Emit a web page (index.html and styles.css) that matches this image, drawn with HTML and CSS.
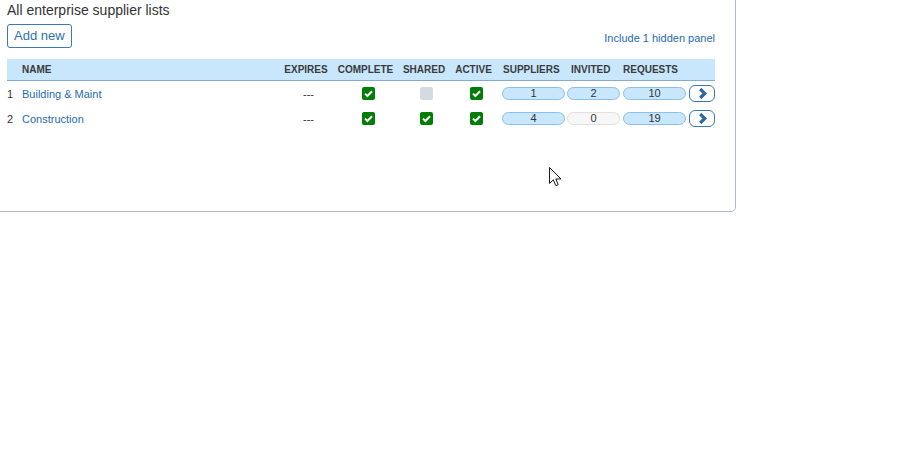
FILE: index.html
```html
<!DOCTYPE html>
<html lang="en">
<head>
<meta charset="utf-8">
<title>Enterprise supplier lists</title>
<link rel="stylesheet" href="styles.css">
</head>
<body>
<section class="panel">
  <h2 class="panel-title">All enterprise supplier lists</h2>
  <div class="toolbar">
    <button class="btn-add" type="button">Add new</button>
    <a class="link-hidden" href="#">Include 1 hidden panel</a>
  </div>

  <div class="grid">
    <div class="row head">
      <div class="c num"></div>
      <div class="c name">Name</div>
      <div class="c mid">Expires</div>
      <div class="c mid">Complete</div>
      <div class="c mid">Shared</div>
      <div class="c mid">Active</div>
      <div class="c h-sup">Suppliers</div>
      <div class="c h-inv">Invited</div>
      <div class="c h-req">Requests</div>
      <div class="c"></div>
    </div>

    <div class="row">
      <div class="c num">1</div>
      <div class="c name"><a href="#">Building &amp; Maint</a></div>
      <div class="c mid data">---</div>
      <div class="c mid data"><span class="chk on"></span></div>
      <div class="c mid data"><span class="chk"></span></div>
      <div class="c mid data"><span class="chk on"></span></div>
      <div class="c"><span class="pill p-sup">1</span></div>
      <div class="c"><span class="pill p-inv">2</span></div>
      <div class="c"><span class="pill p-req">10</span></div>
      <div class="c"><button class="go" type="button"><svg viewBox="0 0 11 11" width="11" height="11"><path d="M3.2 1 L7.8 5.5 L3.2 10" fill="none" stroke="#2f66a3" stroke-width="3.2" stroke-linejoin="miter"/></svg></button></div>
    </div>

    <div class="row">
      <div class="c num">2</div>
      <div class="c name"><a href="#">Construction</a></div>
      <div class="c mid data">---</div>
      <div class="c mid data"><span class="chk on"></span></div>
      <div class="c mid data"><span class="chk on"></span></div>
      <div class="c mid data"><span class="chk on"></span></div>
      <div class="c"><span class="pill p-sup">4</span></div>
      <div class="c"><span class="pill p-inv empty">0</span></div>
      <div class="c"><span class="pill p-req">19</span></div>
      <div class="c"><button class="go" type="button"><svg viewBox="0 0 11 11" width="11" height="11"><path d="M3.2 1 L7.8 5.5 L3.2 10" fill="none" stroke="#2f66a3" stroke-width="3.2" stroke-linejoin="miter"/></svg></button></div>
    </div>
  </div>
</section>

<svg class="cursor" width="13" height="21" viewBox="0 0 13 21">
  <path d="M0.5 0.5 L0.5 16.5 L4.3 12.8 L6.8 18.7 L9.2 17.7 L6.8 12 L12 12 Z" fill="#fff" stroke="#1b1b1b" stroke-width="1" stroke-linejoin="miter"/>
</svg>
</body>
</html>
```

FILE: styles.css
```css
html, body {
  margin: 0;
  padding: 0;
  background: #fff;
}

body {
  font-family: "Liberation Sans", Arial, sans-serif;
  color: #333;
  position: relative;
  height: 469px;
  overflow: hidden;
}

a {
  color: #1f6cb0;
  text-decoration: none;
}

.panel {
  margin: -1px 0 0 -1px;
  width: 708px;
  padding: 2px 20px 80px 7px;
  border: 1px solid #aebcc9;
  border-radius: 0 0 5px 0;
}

.panel-title {
  margin: 0;
  font-size: 14px;
  line-height: 17px;
  font-weight: normal;
  color: #333;
}

.toolbar {
  display: flex;
  justify-content: space-between;
  align-items: center;
  margin-top: 5px;
}

.btn-add {
  font-family: inherit;
  font-size: 13px;
  line-height: 16px;
  height: 24px;
  padding: 3px 6px;
  color: #2d70b1;
  background: #fff;
  border: 1px solid #3a79b6;
  border-radius: 3px;
}

.link-hidden {
  font-size: 11px;
  margin-top: 4px;
}

.grid {
  margin-top: 11px;
}

.row {
  display: grid;
  grid-template-columns: 15px 257px 54px 65px 52px 47px 69px 55px 66px 28px;
  height: 25px;
  align-items: center;
  font-size: 11px;
}

.row.head {
  height: 21px;
  background: #c8e6fc;
  border-bottom: 1px solid #86aacb;
  font-size: 10px;
  font-weight: bold;
  text-transform: uppercase;
  color: #3b3b3b;
}

.c {
  display: flex;
  align-items: center;
  white-space: nowrap;
}

.num {
  color: #333;
}

.mid {
  justify-content: center;
}

.mid.data {
  padding-left: 5px;
}

.h-sup { padding-left: 6px; }
.h-inv { padding-left: 5px; }
.h-req { padding-left: 2px; }

.chk {
  display: block;
  width: 13px;
  height: 13px;
  border-radius: 2px;
  background: #d3dae2;
}

.chk.on {
  background: #007d05 url("data:image/svg+xml,%3Csvg xmlns='http://www.w3.org/2000/svg' viewBox='0 0 13 13'%3E%3Cpath d='M3 6.6 L5.4 9 L10 4.2' fill='none' stroke='white' stroke-width='2'/%3E%3C/svg%3E") center / 13px 13px no-repeat;
}

.pill {
  display: block;
  height: 11px;
  line-height: 11px;
  text-align: center;
  font-size: 11px;
  color: #333;
  background: #c8e6fc;
  border: 1px solid #8cc0e6;
  border-radius: 7px;
}

.p-sup { margin-left: 5px; width: 61px; }
.p-inv { margin-left: 1px; width: 51px; }
.p-req { margin-left: 2px; width: 61px; }

.pill.empty {
  background: #f7f7f7;
  border-color: #e3dfda;
}

.go {
  display: flex;
  align-items: center;
  justify-content: center;
  margin-left: 2px;
  width: 26px;
  height: 17px;
  padding: 0;
  background: #fff;
  border: 1px solid #3b77b3;
  border-radius: 6px;
}

.cursor {
  position: absolute;
  left: 549px;
  top: 167px;
}
```
